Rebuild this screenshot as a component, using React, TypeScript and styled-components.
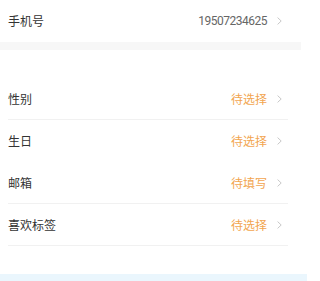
import React from "react";
import styled, { createGlobalStyle } from "styled-components";

const GlobalStyle = createGlobalStyle`
  html, body {
    margin: 0;
    padding: 0;
    background: #fff;
  }
  body {
    font-family: "Noto Sans CJK SC", "Noto Sans", sans-serif;
  }
`;

const Page = styled.div`
  width: 307px;
  display: flex;
  flex-direction: column;
`;

const Section = styled.div`
  width: 301px;
  display: flex;
  flex-direction: column;
`;

const Row = styled.div<{ $line?: boolean }>`
  height: 41px;
  margin: 0 13px 0 8px;
  display: flex;
  align-items: center;
  justify-content: space-between;
  border-bottom: 1px solid ${(p) => (p.$line ? "#f1f1f1" : "transparent")};
`;

const Label = styled.span`
  font-size: 12px;
  color: #333;
  line-height: 1;
`;

const Right = styled.div`
  display: flex;
  align-items: center;
  gap: 10px;
  padding-right: 6px;
`;

const Value = styled.span<{ $pending?: boolean }>`
  font-size: 12px;
  line-height: 1;
  color: ${(p) => (p.$pending ? "#f2a54f" : "#666")};
  font-family: ${(p) =>
    p.$pending ? `"Noto Sans CJK SC", sans-serif` : `Roboto, "Noto Sans", sans-serif`};
  letter-spacing: ${(p) => (p.$pending ? "0" : "-0.5px")};
`;

const GrayBand = styled.div`
  width: 301px;
  height: 8px;
  background: #f7f7f7;
`;

const Gap = styled.div`
  height: 28px;
`;

const BlueBand = styled.div`
  height: 8px;
  background: #eaf6fd;
`;

const Chevron = () => (
  <svg width="5" height="8" viewBox="0 0 5 8">
    <path d="M0.6 0.6 L4.2 4 L0.6 7.4" fill="none" stroke="#c2c2c2" strokeWidth="0.9" />
  </svg>
);

const items = [
  { label: "性别", value: "待选择", line: true },
  { label: "生日", value: "待选择", line: false },
  { label: "邮箱", value: "待填写", line: true },
  { label: "喜欢标签", value: "待选择", line: true },
];

export default function App() {
  return (
    <Page>
      <GlobalStyle />
      <Section>
        <Row>
          <Label>手机号</Label>
          <Right>
            <Value>19507234625</Value>
            <Chevron />
          </Right>
        </Row>
      </Section>
      <GrayBand />
      <Gap />
      <Section>
        {items.map((it) => (
          <Row key={it.label} $line={it.line}>
            <Label>{it.label}</Label>
            <Right>
              <Value $pending>{it.value}</Value>
              <Chevron />
            </Right>
          </Row>
        ))}
      </Section>
      <Gap />
      <BlueBand />
    </Page>
  );
}
